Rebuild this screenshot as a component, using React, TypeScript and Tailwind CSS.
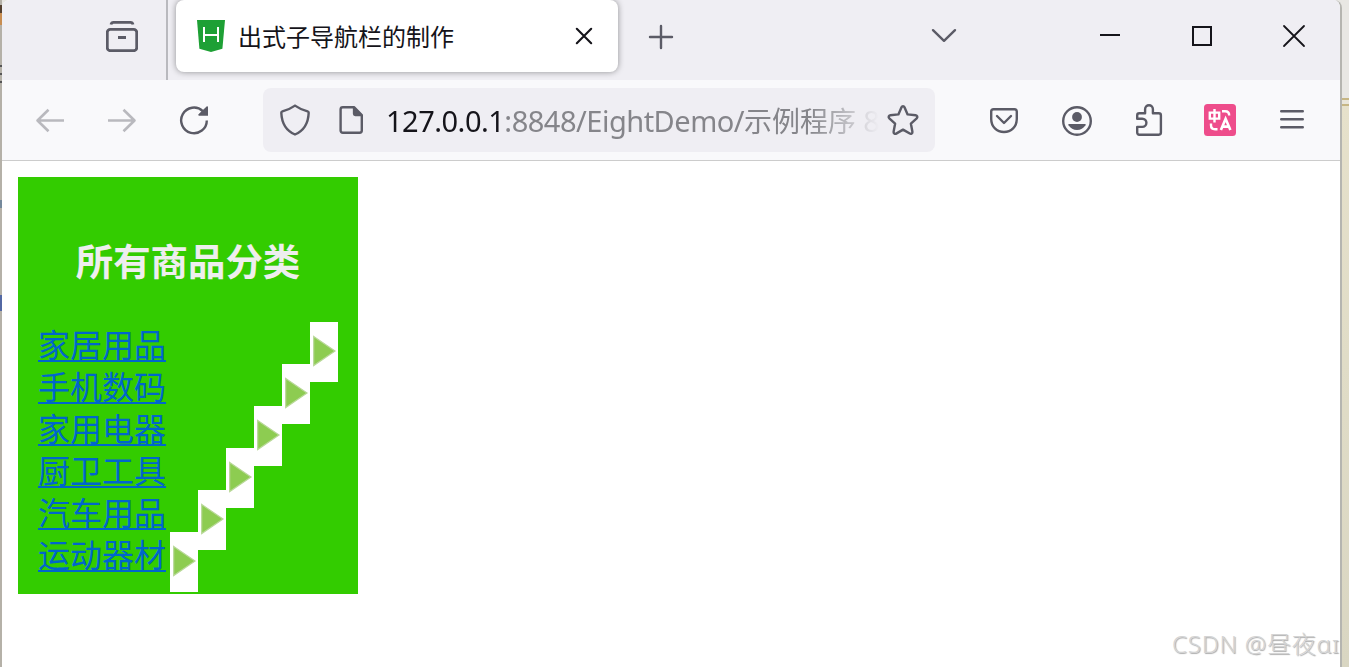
import type { ReactNode } from "react";

const categories = ["家居用品", "手机数码", "家用电器", "厨卫工具", "汽车用品", "运动器材"];

function Icon({ children, className = "" }: { children: ReactNode; className?: string }) {
  return (
    <svg
      viewBox="0 0 32 32"
      fill="none"
      stroke="currentColor"
      strokeWidth="2.4"
      strokeLinecap="round"
      strokeLinejoin="round"
      className={`size-8 shrink-0 text-[#5b5b66] ${className}`}
    >
      {children}
    </svg>
  );
}

function TabBar() {
  return (
    <div className="flex h-20 bg-[#efeef3]">
      <div className="flex w-[166px] shrink-0 border-r-2 border-[#b9b9be] pt-5 pl-[104px]">
        <Icon>
          <path d="M5 4.6C5.3 3 6 2.4 7.6 2.4h16.8c1.6 0 2.3.6 2.6 2.2" strokeWidth="2.8" strokeLinecap="butt" />
          <rect x="1.3" y="9.3" width="29.4" height="21.4" rx="3" strokeWidth="2.8" />
          <path d="M12 17.5h8" strokeWidth="3" strokeLinecap="butt" />
        </Icon>
      </div>
      <div className="ml-2 flex h-[72px] w-[442px] shrink-0 items-center rounded-lg bg-white pr-[18px] pl-[21px] shadow-[0_0_6px_rgba(0,0,0,0.4)]">
        <svg viewBox="0 0 28 32" className="h-8 w-7 shrink-0">
          <path d="M0 0h28l-2.6 28.8L14 32 2.4 28.8z" fill="#1ea035" />
          <path d="M7 7v15M21 7v15M7 15h14" stroke="#fff" strokeWidth="2" fill="none" />
        </svg>
        <span className="mt-0.5 ml-[13px] flex-1 text-2xl leading-8 whitespace-nowrap text-[#15141a]">出式子导航栏的制作</span>
        <Icon className="text-[#15141a]">
          <path d="M8.8 8.8l14.4 14.4M23.2 8.8L8.8 23.2" strokeWidth="2.1" />
        </Icon>
      </div>
      <div className="ml-[27px] flex flex-1 items-start pt-5">
        <Icon>
          <path d="M16 6v22M5 17h22" />
        </Icon>
        <Icon className="ml-[251px]">
          <path d="M5 10.2l11 10.6 11-10.6" />
        </Icon>
        <div className="ml-[134px] flex gap-[60px]">
          <Icon className="text-[#15141a]">
            <path d="M6 15h20" strokeWidth="2" strokeLinecap="butt" />
          </Icon>
          <Icon className="text-[#15141a]">
            <rect x="7" y="7" width="18" height="18" strokeWidth="2" strokeLinejoin="miter" />
          </Icon>
          <Icon className="text-[#15141a]">
            <path d="M6 6l20 20M26 6L6 26" strokeWidth="1.8" />
          </Icon>
        </div>
      </div>
    </div>
  );
}

function AddressBar() {
  return (
    <div className="ml-[53px] flex h-16 w-[672px] shrink-0 items-center rounded-lg bg-[#efeef3] px-4">
      <Icon>
        <path d="M16 1.6c3.6 2.6 8.3 4.5 12.6 5.7.7.2 1.1.8 1.1 1.5C29.3 18.4 25.4 26.6 16 30.5 6.6 26.6 2.7 18.4 2.3 8.8c0-.7.4-1.3 1.1-1.5C7.7 6.1 12.4 4.2 16 1.6z" />
      </Icon>
      <Icon className="ml-6">
        <path d="M7.8 3.2H19l7.8 7.8v15.6c0 1.3-.9 2.2-2.2 2.2H7.8c-1.3 0-2.2-.9-2.2-2.2V5.4c0-1.3.9-2.2 2.2-2.2z" />
        <path d="M18.6 3.2v6.5c0 1.1.6 1.7 1.7 1.7h6.5z" fill="currentColor" strokeWidth="1.5" />
      </Icon>
      <div className="mt-px ml-[19px] flex-1 overflow-hidden text-[29px] leading-10 tracking-[-0.5px] whitespace-nowrap text-[#85858a] [mask-image:linear-gradient(to_right,#000_86%,transparent)]">
        <span className="text-[#15141a]">127.0.0.1</span>
        <span>:8848/EightDemo/</span>
        <span className="text-[28px] tracking-normal">示例程序</span>
        <span> 8</span>
      </div>
      <Icon className="ml-2">
        <path d="M14.5 3.3c.6-1.4 2.4-1.4 3 0l3.1 7.1 8.1.8c1.6.2 2.2 2 1 3.1L23.9 19.7l1.5 8c.3 1.5-1.3 2.7-2.6 1.9L16 25.6l-6.8 4c-1.3.8-2.9-.4-2.6-1.9l1.5-8-5.8-5.4c-1.2-1.1-.6-2.9 1-3.1l8.1-.8z" />
      </Icon>
    </div>
  );
}

function Toolbar() {
  return (
    <div className="flex h-[81px] items-center border-b border-[#cccccc] bg-[#f9f9fb] pl-8">
      <Icon className="text-[#b9b9be]">
        <path d="M30 16.5H3.5M14.5 5.8L3.5 16.5l11 10.7" strokeWidth="2.6" strokeLinecap="butt" />
      </Icon>
      <Icon className="ml-10 text-[#b9b9be]">
        <path d="M2 16.5h26.5M17.5 5.8l11 10.7-11 10.7" strokeWidth="2.6" strokeLinecap="butt" />
      </Icon>
      <Icon className="ml-10">
        <path d="M24.8 7.1A12.8 12.8 0 1 0 28.8 16.4" strokeLinecap="butt" />
        <path d="M30 3.1v8.7H21.2c-.9 0-1.2-.9-.7-1.5l8.1-7.8c.6-.6 1.4-.2 1.4.6z" fill="currentColor" stroke="none" />
      </Icon>
      <AddressBar />
      <div className="ml-[53px] flex items-center gap-10">
        <Icon>
          <path d="M5.6 5.2h20.8c1.4 0 2.4 1 2.4 2.4V15C28.8 22.7 23.2 28 16 28S3.2 22.7 3.2 15V7.6c0-1.4 1-2.4 2.4-2.4z" />
          <path d="M9 12l7 7 7-7" />
        </Icon>
        <Icon className="ml-px">
          <circle cx="16" cy="17" r="13.8" />
          <circle cx="16" cy="13" r="4.9" fill="currentColor" stroke="none" />
          <path d="M8.2 20h15.6c.8 0 1.1.6.7 1.2-2.1 3-4.9 4.9-8.5 4.9s-6.4-1.9-8.5-4.9c-.4-.6-.1-1.2.7-1.2z" fill="currentColor" stroke="none" />
        </Icon>
        <Icon>
          <path d="M12.1 9.3V5.2a3.9 3.9 0 0 1 7.8 0v4.1h5.9c1.3 0 2.1.8 2.1 2.1v17.2c0 1.3-.8 2.1-2.1 2.1H6.3c-1.3 0-2.1-.8-2.1-2.1v-5.7h5.1a4.1 4.1 0 0 0 0-8.2H4.2v-3.3c0-1.3.8-2.1 2.1-2.1z" />
        </Icon>
        <Icon className="-ml-px text-white">
          <rect width="32" height="32" rx="3.5" fill="#ee4d8b" stroke="none" />
          <g strokeLinecap="butt" strokeLinejoin="miter" strokeWidth="2.4">
            <path d="M5.8 8.6h9.4v6H5.8zM10.5 5v13.5" />
            <path d="M18 7.2h3.2c2.8 0 4 1.4 4 4.3M7 19.5v1.7c0 2.8 1.2 4 4 4h2.5" />
            <path d="M16.9 26l4.7-11.2L26.4 26M18.5 22.6h6.2" strokeWidth="2.6" />
          </g>
        </Icon>
        <Icon>
          <path d="M5.2 7.2h21.6M5.2 15.2h21.6M5.2 23.2h21.6" />
        </Icon>
      </div>
    </div>
  );
}

// Each arrow is taller than its row, so the floats step to the left.
function CategoryMenu() {
  return (
    <nav className="w-[340px] bg-[#33cc00] p-5">
      <h3 className="mt-10 mb-[35px] text-center text-[37.44px] leading-[50px] font-bold text-[#eeeeee]">所有商品分类</h3>
      <ul className="h-[252px]">
        {categories.map((name) => (
          <li key={name} className="h-[42px] text-[32px] leading-[46px]">
            <svg viewBox="0 0 28 60" className="float-right h-[60px] w-7 bg-white">
              <path d="M3.7 14.5L25 29 3.7 43.5z" fill="#8dcc51" stroke="#b8d898" strokeWidth="1.2" />
            </svg>
            <a href="#" className="text-[#0066cc] underline decoration-2 underline-offset-[3px] [text-decoration-skip-ink:none]">{name}</a>
          </li>
        ))}
      </ul>
    </nav>
  );
}

export default function App() {
  return (
    <div className="relative flex h-[667px] w-[1349px] overflow-hidden bg-[#b5b1a8] font-['Noto_Sans','Noto_Sans_CJK_SC',sans-serif]">
      <div className="flex w-0.5 shrink-0 flex-col bg-[#b5b1a8]">
        <div className="mt-[5px] h-2 bg-[#54402f]" />
        <div className="h-3 bg-[#c88d51]" />
        <div className="mt-10 h-0.5 bg-[#555555]" />
        <div className="mt-1.5 h-0.5 bg-[#555555]" />
        <div className="mt-1.5 h-0.5 bg-[#555555]" />
        <div className="mt-[117px] h-2 bg-[#75899b]" />
        <div className="mt-[87px] h-4 bg-[#5368a3]" />
      </div>
      <div className="flex flex-1 bg-[#e8e7e3]">
        <main className="w-[1340px] shrink-0 overflow-hidden rounded-t-lg border-r-2 border-[#b5b5b0] bg-white">
          <TabBar />
          <Toolbar />
          <div className="p-4">
            <CategoryMenu />
          </div>
        </main>
        <div className="flex flex-1 flex-col">
          <div className="h-[98px] bg-[#e8e7e3]" />
          <div className="h-2 border-y-2 border-[#c6b684] bg-[#e9e6da]" />
          <div className="flex-1 bg-linear-to-b from-[#e6e1cb] to-[#d9d6c2]" />
        </div>
      </div>
      <span className="absolute top-[626px] left-[1172px] text-2xl leading-9 font-light tracking-[0.8px] whitespace-nowrap text-[#d4d4d4] [text-shadow:1px_1px_1px_#aaaaaa]">
        CSDN @昼夜ɑɪ
      </span>
    </div>
  );
}
